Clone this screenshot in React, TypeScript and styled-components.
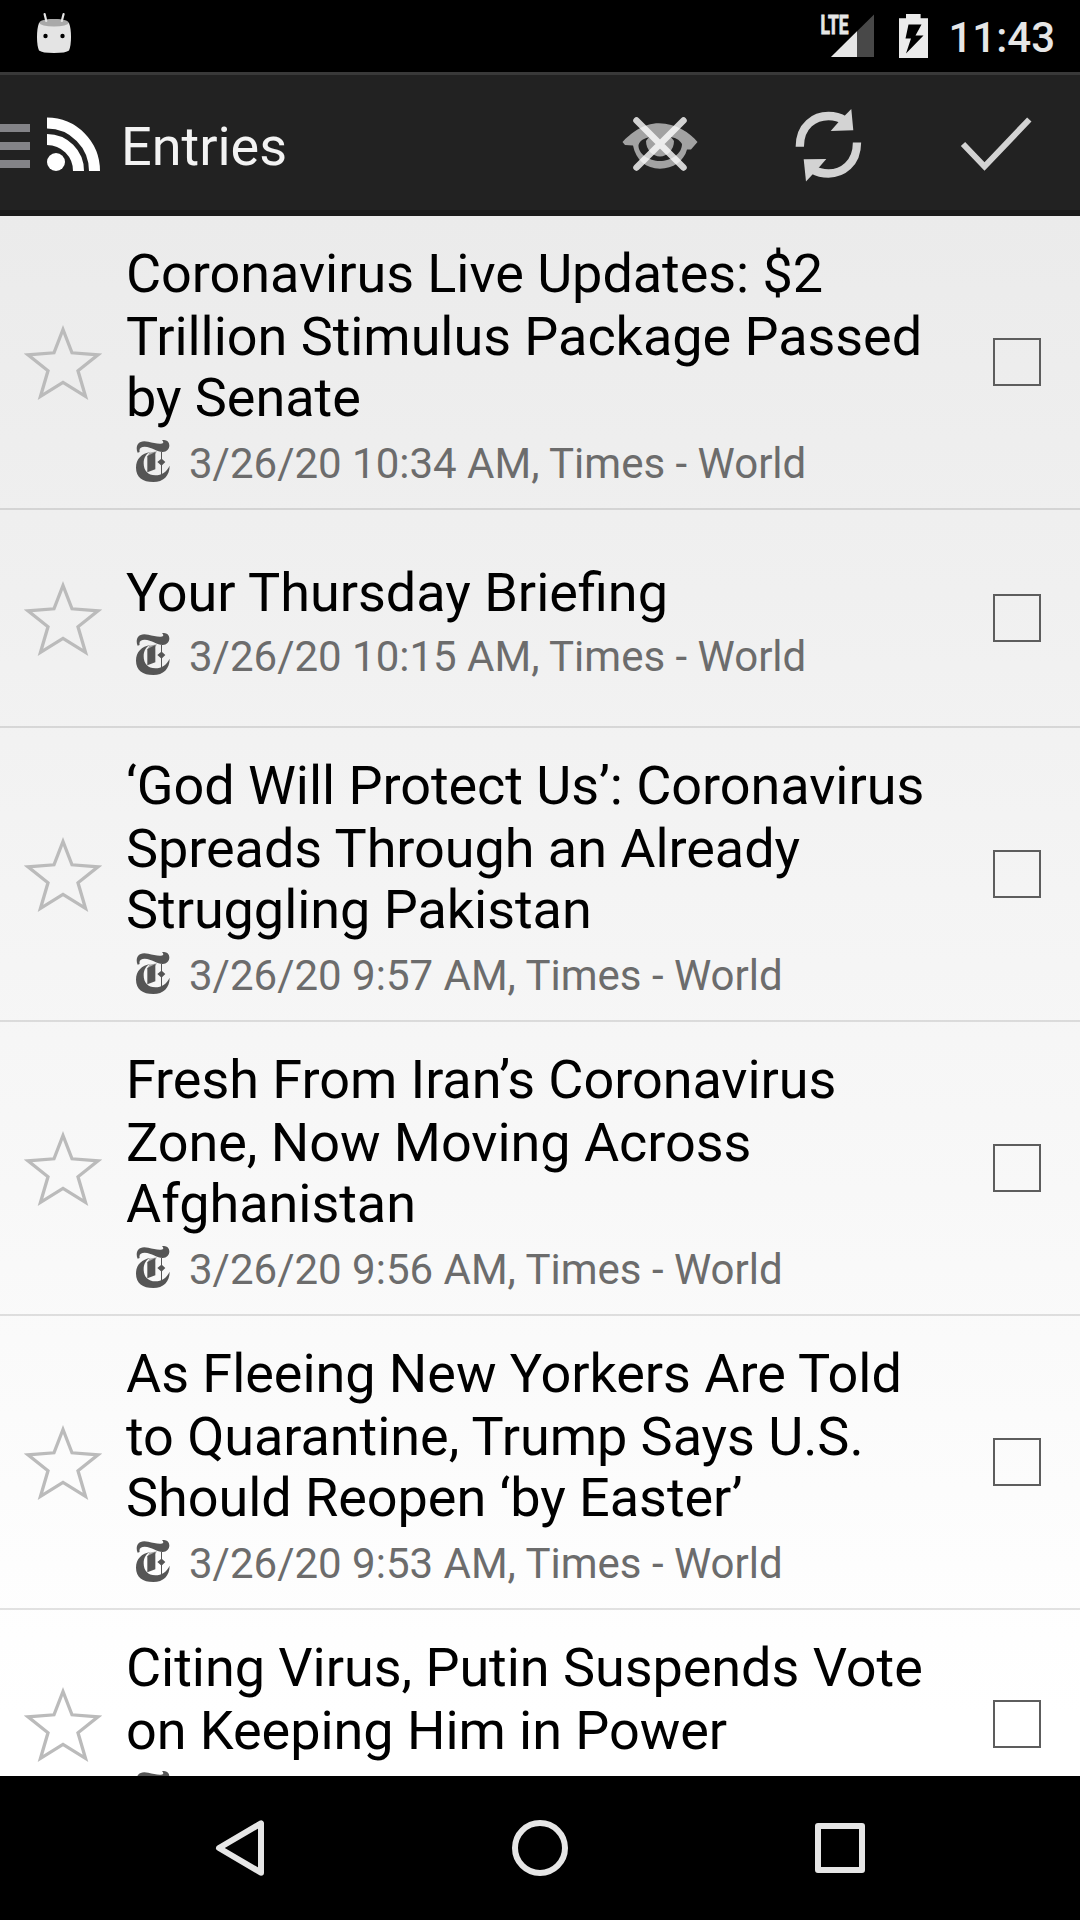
import React from "react";
import styled, { createGlobalStyle } from "styled-components";

const GlobalStyle = createGlobalStyle`
  *, *::before, *::after { box-sizing: border-box; }
  html, body { margin: 0; padding: 0; background: #000; overflow: hidden; }
  svg { display: block; flex: none; }
`;

const Screen = styled.div`
  width: 1080px;
  height: 1920px;
  display: flex;
  flex-direction: column;
  overflow: hidden;
  font-family: Roboto, "Noto Sans", sans-serif;
`;

const StatusBar = styled.header`
  height: 72px;
  flex: none;
  display: flex;
  align-items: flex-start;
  background: #000;
  padding: 0 25px 0 36px;
`;

const StatusIcons = styled.div`
  display: flex;
  margin-left: auto;
  gap: 22px;
`;

const Clock = styled.time`
  margin-left: -3px;
  color: #e6e6e6;
  font-size: 42px;
  font-weight: 500;
  line-height: 49px;
  padding-top: 12.5px;
`;

const ActionBar = styled.div`
  height: 144px;
  flex: none;
  display: flex;
  align-items: center;
  background: #222;
  border-top: 3px solid #393939;
  border-bottom: 6px solid #1b1b1b;
`;

const DrawerHandle = styled.div`
  width: 30px;
  display: flex;
  flex-direction: column;
  gap: 10px;
  margin-top: 7px;
`;

const DrawerLine = styled.span`
  height: 8px;
  background: #838387;
`;

const ActionTitle = styled.h1`
  margin: 0 auto 0 20px;
  padding-top: 7px;
  color: #f3f3f3;
  font-size: 54px;
  font-weight: 400;
  line-height: 63px;
`;

const BarButton = styled.button<{ $width: number }>`
  width: ${(p) => p.$width}px;
  height: 100%;
  padding: 0;
  border: 0;
  background: transparent;
  display: flex;
  align-items: center;
  justify-content: center;
`;

const EntryList = styled.ul`
  flex: 1;
  min-height: 0;
  margin: 0;
  padding: 0;
  list-style: none;
  overflow: hidden;
  background: linear-gradient(#ebebeb, #ffffff 96%);
`;

const EntryRow = styled.li`
  display: flex;
  align-items: center;
  border-bottom: 2px solid rgba(0, 0, 0, 0.11);
`;

const StarCell = styled.div`
  width: 126px;
  flex: none;
  display: flex;
  justify-content: center;
`;

const EntryBody = styled.div<{ $lines: number }>`
  flex: 1;
  min-height: 216px;
  padding: 26px 0 ${(p) => (p.$lines === 2 ? 19 : 20)}px;
  display: flex;
  flex-direction: column;
  justify-content: center;
`;

const EntryTitle = styled.h2<{ $lines: number }>`
  margin: 0 0 8px;
  color: #000;
  font-size: 54px;
  font-weight: 400;
  line-height: 63px;
  letter-spacing: ${(p) => (p.$lines === 1 ? "normal" : "-0.05px")};
  white-space: nowrap;
`;

const TitleLine = styled.span`
  display: block;

  &:nth-child(3) {
    margin: -2px 0 2px;
  }
`;

const Meta = styled.div`
  display: flex;
  align-items: flex-start;
  gap: 19px;
  height: 49px;
  padding-left: 10px;
  color: #6c6c6c;
  font-size: 42px;
  line-height: 49px;
  white-space: nowrap;
`;

const FeedIcon = styled.svg`
  width: 34px;
  height: 42px;
  margin-top: 1px;
  fill: #555;
`;

const CheckBox = styled.span`
  width: 48px;
  height: 48px;
  flex: none;
  margin-right: 39px;
  border: 2px solid #5d5d5d;
`;

const NavBar = styled.nav`
  height: 144px;
  flex: none;
  display: flex;
  justify-content: center;
  background: #000;
`;

const AndroidIcon = () => (
  <svg width="36" height="72" viewBox="36 0 36 72">
    <path d="M39 23Q54 15 69 23Q71 28 71 37Q71 46 69 50.500Q66 53 54 53Q42 53 39 50.500Q37 46 37 37Q37 28 39 23Z" fill="#e4e4e4" />
    <ellipse cx="54" cy="22.800" rx="14.600" ry="3.800" fill="#a9a9a9" />
    <path d="M44.600 14L46.300 21M63.600 14L61.800 21" stroke="#e4e4e4" strokeWidth="2.200" strokeLinecap="round" />
    <circle cx="45.500" cy="36" r="2.200" />
    <circle cx="62.500" cy="36" r="2.200" />
  </svg>
);

const SignalIcon = () => (
  <svg width="56" height="72" viewBox="820 0 56 72">
    <path d="M831 57L874 14.500V57Z" fill="#484848" />
    <path d="M831 57L857 31.300V57Z" fill="#e6e6e6" />
    <text
      x="820.500"
      y="33.500"
      fill="#e6e6e6"
      stroke="#e6e6e6"
      strokeWidth="0.900"
      fontSize="25.500"
      fontWeight="700"
      textLength="28"
      lengthAdjust="spacingAndGlyphs"
    >
      LTE
    </text>
  </svg>
);

const BatteryIcon = () => (
  <svg width="31" height="72" viewBox="898 0 31 72">
    <path d="M906 14H920.600V18.300H928V58H899V18.300H906Z" fill="#ebebeb" />
    <path d="M908.500 24.500H921.500L915.500 35.500H923.500L906 53.500L911 38.500H905.500Z" fill="#000" />
  </svg>
);

const RssIcon = () => (
  <svg width="71" height="135" viewBox="30 75 71 135" fill="none" stroke="#fff">
    <circle cx="56" cy="162" r="9" fill="#fff" stroke="none" />
    <path d="M47 139.500A31.500 31.500 0 0 1 78.500 171" strokeWidth="11" />
    <path d="M47 123A47.500 48 0 0 1 94.500 171" strokeWidth="11" />
  </svg>
);

const HideReadIcon = () => (
  <svg width="168" height="135" viewBox="576 75 168 135">
    <path
      fillRule="evenodd"
      fill="#a2a2a2"
      d="M622.500 142C630 134 643 123.300 659 123.300C676 123.300 690 133 697.500 142L691 149.500L687 149.500C684 161 673 168.700 660 168.700C646 168.700 636 160 633 145.500L625 145ZM638.500 145C638 154 649 161 660 161C671 161 682 154 682 144C679 139 675 138 671 137L650 137C645 138 640 140 638.500 145Z"
    />
    <path d="M646 141C649 136 655 132 660 132S671 136 674 141C674 150 667 156.500 660 156.500S646 150 646 141Z" fill="#a2a2a2" />
    <path d="M636.500 120.500L683.500 167.500M683.500 120.500L636.500 167.500" stroke="#fff" strokeOpacity="0.800" strokeWidth="6.500" strokeLinecap="round" />
  </svg>
);

const RefreshIcon = () => (
  <svg width="168" height="135" viewBox="744 75 168 135" fill="none" stroke="#d3d3d3" strokeWidth="8.300">
    <path d="M799.800 146.700C799.800 125 815 116 828.500 116C835 116 840 117.500 845 120.500" />
    <path d="M851.300 109L853.300 130.300L830.700 131L839 121.500Z" fill="#d3d3d3" stroke="none" />
    <path d="M857 142.500C857 164 842 173.500 828.500 173.500C823 173.500 817 172 812.500 169.500" />
    <path d="M806 181.500L803.700 159.300L826.300 159L818.500 168Z" fill="#d3d3d3" stroke="none" />
  </svg>
);

const CheckIcon = () => (
  <svg width="168" height="135" viewBox="912 75 168 135" fill="none" stroke="#d3d3d3" strokeWidth="6">
    <path d="M963 144L984.500 166.500L1029.300 119.500" />
  </svg>
);

const StarIcon = () => (
  <svg width="84" height="84" viewBox="21 320 84 84" fill="none" stroke="#bbb" strokeWidth="3.300">
    <path d="M63 329.500L72 352.800L98 354.900L78 370.800L85.500 396.300L63 382.400L40.500 396.300L48 370.800L28 354.900L54 352.800Z" />
  </svg>
);

const TimesLogo = () => (
  <FeedIcon viewBox="408 660 102 126" preserveAspectRatio="none">
    <path d="M413 698C409 690 409 679 414 672C420 663 432 662 445 665C458 668 472 672 483 671C491 670 492 666 486 660C499 659 508 664 508 676C508 688 500 696 488 696C472 696 455 681 434 680C423 680 416 685 419 696Z" />
    <path d="M452 695C438 701 431 713 431 730C431 752 444 766 466 766C485 766 499 757 509 737C509 767 490 786 460 786C428 786 408 771 408 743C408 716 424 701 452 695Z" />
    <path d="M442 708L466 696V748L442 757Z" />
    <path d="M448 698L471 694L466 701L442 712Z" fillOpacity="0.500" />
    <path d="M483 696H486V717L496 726L486 736V765H483V736L472 726L483 717Z" />
  </FeedIcon>
);

const BackIcon = () => (
  <svg width="60" height="60" viewBox="210 1818 60 60" fill="none" stroke="#e6e6e6" strokeWidth="6" strokeLinejoin="round">
    <path d="M219 1848L261 1823.300V1872.700Z" />
  </svg>
);

const HomeIcon = () => (
  <svg width="60" height="60" viewBox="510 1818 60 60" fill="none" stroke="#e6e6e6" strokeWidth="6">
    <circle cx="540" cy="1848" r="25" />
  </svg>
);

const RecentIcon = () => (
  <svg width="60" height="60" viewBox="810 1818 60 60" fill="none" stroke="#e6e6e6" strokeWidth="6" strokeLinejoin="round">
    <rect x="818" y="1826" width="44" height="44" />
  </svg>
);

interface Entry {
  title: string[];
  time?: string;
}

const entries: Entry[] = [
  { title: ["Coronavirus Live Updates: $2", "Trillion Stimulus Package Passed", "by Senate"], time: "3/26/20 10:34 AM" },
  { title: ["Your Thursday Briefing"], time: "3/26/20 10:15 AM" },
  { title: ["‘God Will Protect Us’: Coronavirus", "Spreads Through an Already", "Struggling Pakistan"], time: "3/26/20 9:57 AM" },
  { title: ["Fresh From Iran’s Coronavirus", "Zone, Now Moving Across", "Afghanistan"], time: "3/26/20 9:56 AM" },
  { title: ["As Fleeing New Yorkers Are Told", "to Quarantine, Trump Says U.S.", "Should Reopen ‘by Easter’"], time: "3/26/20 9:53 AM" },
  { title: ["Citing Virus, Putin Suspends Vote", "on Keeping Him in Power"] },
];

export default function App() {
  return (
    <>
      <GlobalStyle />
      <Screen>
        <StatusBar>
          <AndroidIcon />
          <StatusIcons>
            <SignalIcon />
            <BatteryIcon />
            <Clock>11:43</Clock>
          </StatusIcons>
        </StatusBar>
        <ActionBar>
          <DrawerHandle>
            <DrawerLine />
            <DrawerLine />
            <DrawerLine />
          </DrawerHandle>
          <RssIcon />
          <ActionTitle>Entries</ActionTitle>
          <BarButton $width={168}><HideReadIcon /></BarButton>
          <BarButton $width={168}><RefreshIcon /></BarButton>
          <BarButton $width={168}><CheckIcon /></BarButton>
        </ActionBar>
        <EntryList>
          {entries.map((entry) => (
            <EntryRow key={entry.title[0]}>
              <StarCell><StarIcon /></StarCell>
              <EntryBody $lines={entry.title.length}>
                <EntryTitle $lines={entry.title.length}>
                  {entry.title.map((line) => (
                    <TitleLine key={line}>{line}</TitleLine>
                  ))}
                </EntryTitle>
                <Meta>
                  <TimesLogo />
                  {entry.time && <span>{entry.time}, Times - World</span>}
                </Meta>
              </EntryBody>
              <CheckBox />
            </EntryRow>
          ))}
        </EntryList>
        <NavBar>
          <BarButton $width={300}><BackIcon /></BarButton>
          <BarButton $width={300}><HomeIcon /></BarButton>
          <BarButton $width={300}><RecentIcon /></BarButton>
        </NavBar>
      </Screen>
    </>
  );
}
